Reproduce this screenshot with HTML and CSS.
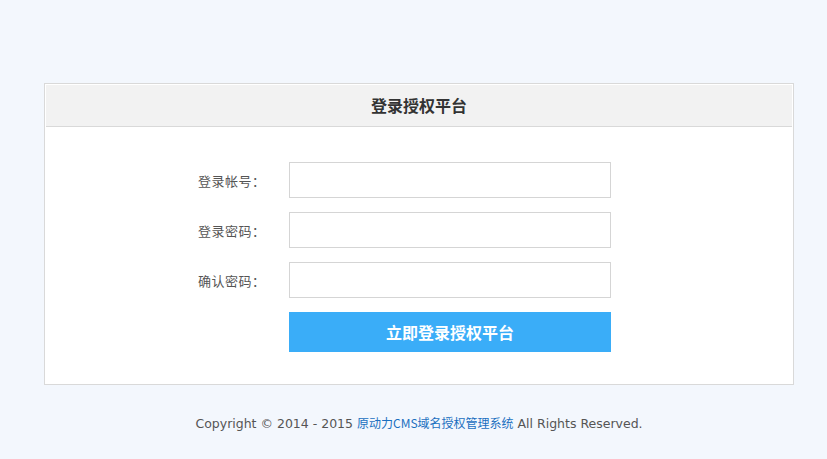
FILE: index.html
```html
<!DOCTYPE html>
<html>
  <head>
    <title>登录授权平台</title>
    <link rel="stylesheet" href="styles.css">
  </head>
  <body>
    <div class="panel">
      <div class="panel-head">登录授权平台</div>
      <form class="panel-body">
        <div class="form-row">
          <label for="account">登录帐号：</label>
          <input id="account" type="text" />
        </div>
        <div class="form-row">
          <label for="password">登录密码：</label>
          <input id="password" type="password" />
        </div>
        <div class="form-row">
          <label for="password2">确认密码：</label>
          <input id="password2" type="password" />
        </div>
        <div class="form-row">
          <span class="label-spacer"></span>
          <button type="button">立即登录授权平台</button>
        </div>
      </form>
    </div>
    <div class="footer">
      Copyright © 2014 - 2015 <a href="#">原动力CMS域名授权管理系统</a> All Rights Reserved.
    </div>
  </body>
</html>
```

FILE: styles.css
```css
html,
body {
  margin: 0;
  padding: 0;
}
body {
  font-family: "DejaVu Sans", "Noto Sans CJK SC", sans-serif;
  font-size: 13px;
  color: #555;
  background: #f3f7fd;
  padding-top: 83px;
}
.panel {
  width: 748px;
  margin-left: 44px;
  border: 1px solid #d9d9d9;
  background: #fff;
  padding: 1px 0 0 0;
}
.panel-head {
  margin: 0 1px;
  height: 41px;
  line-height: 41px;
  background: #f2f2f2;
  border-bottom: 1px solid #d9d9d9;
  box-shadow: 0 1px 0 #fff;
  text-align: center;
  font-family: "Noto Sans CJK SC", sans-serif;
  font-size: 16px;
  font-weight: bold;
  color: #333;
}
.panel-body {
  margin: 0;
  padding: 35px 0 32px 153px;
  display: flex;
  flex-direction: column;
  gap: 14px;
}
.form-row {
  display: flex;
  align-items: center;
}
.form-row label,
.label-spacer {
  width: 91px;
  flex-shrink: 0;
  font-family: "Noto Sans CJK SC", sans-serif;
  font-size: 13px;
  letter-spacing: 0.5px;
  color: #555;
}
.form-row input {
  width: 322px;
  height: 36px;
  box-sizing: border-box;
  border: 1px solid #d5d5d5;
  background: #fff;
  padding: 0 8px;
  font-size: 13px;
  outline: none;
}
.form-row button {
  width: 322px;
  height: 40px;
  border: none;
  background: #3aadf8;
  color: #fff;
  font-family: "Noto Sans CJK SC", sans-serif;
  font-size: 16px;
  font-weight: bold;
  cursor: pointer;
}
.footer {
  margin-top: 28px;
  width: 838px;
  text-align: center;
  line-height: 20px;
  font-size: 12.5px;
}
.footer a {
  color: #1a6fc0;
  text-decoration: none;
  font-family: "Noto Sans CJK SC", sans-serif;
  font-size: 12px;
}
```
